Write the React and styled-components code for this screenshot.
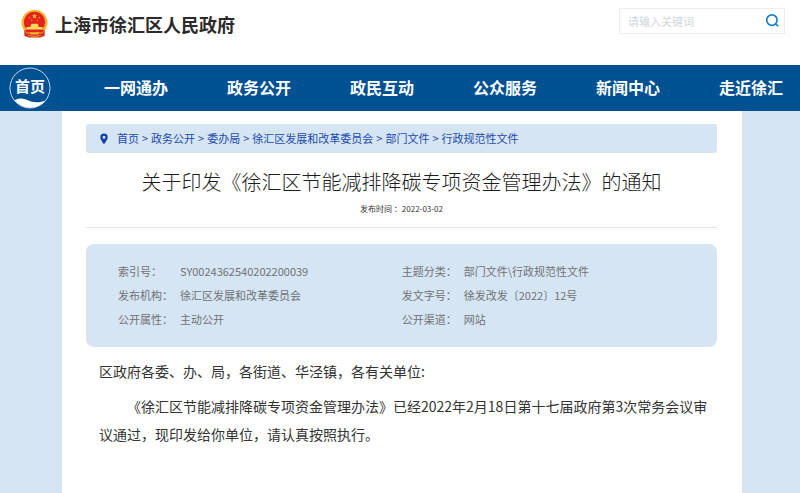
import React, { useState } from 'react';
import styled, { createGlobalStyle } from 'styled-components';

const GlobalStyle = createGlobalStyle`
  * {
    box-sizing: border-box;
  }

  body {
    margin: 0;
    background: #d5e5f3;
    color: #333333;
    font-family: 'Noto Sans CJK SC', 'Noto Sans', sans-serif;
  }
`;

// ===== Styled Components =====
const Page = styled.div`
  min-height: 100vh;
  display: flex;
  flex-direction: column;
`;

const Header = styled.header`
  display: flex;
  justify-content: space-between;
  align-items: flex-start;
  height: 65px;
  padding: 8px 15px 0 20px;
  background: #ffffff;
`;

const Brand = styled.a`
  display: flex;
  align-items: center;
  gap: 6px;
  padding-top: 1px;
  color: #2b2b2b;
  text-decoration: none;
`;

const SiteName = styled.span`
  font-size: 18px;
  line-height: 30px;
  font-weight: 700;
`;

const SearchForm = styled.form`
  display: flex;
  align-items: center;
  width: 166px;
  height: 26px;
  border: 1px solid #eeeeee;
`;

const SearchInput = styled.input`
  flex: 1;
  min-width: 0;
  padding: 0 8px;
  border: 0;
  outline: 0;
  background: transparent;
  color: #333333;
  font-family: inherit;
  font-size: 11px;

  &::placeholder {
    color: #d2d6da;
    opacity: 1;
  }
`;

const SearchButton = styled.button`
  display: grid;
  place-items: center;
  width: 24px;
  height: 24px;
  padding: 0;
  border: 0;
  background: none;
  cursor: pointer;
`;

const Nav = styled.nav`
  display: flex;
  align-items: center;
  height: 46px;
  padding: 0 17px 0 9px;
  background: #005192;
`;

const HomeLink = styled.a`
  position: relative;
  flex: none;
  width: 42px;
  height: 42px;
  color: #ffffff;
  text-align: center;
  font-size: 15px;
  line-height: 38px;
  font-weight: 700;
  text-decoration: none;
`;

const HomeRing = styled.svg`
  position: absolute;
  inset: 0;
`;

const NavList = styled.ul`
  flex: 1;
  display: flex;
  justify-content: space-between;
  margin: 0 0 0 53px;
  padding: 0 0 2px;
  list-style: none;
`;

const NavLink = styled.a`
  color: #ffffff;
  font-size: 16px;
  line-height: 24px;
  font-weight: 700;
  text-decoration: none;
  white-space: nowrap;
`;

const Main = styled.main`
  flex: 1;
  margin: 0 58px 0 62px;
  padding: 13px 25px 16px 24px;
  background: #ffffff;
`;

const Breadcrumb = styled.nav`
  display: flex;
  align-items: center;
  height: 29px;
  padding-left: 14px;
  border-radius: 3px;
  background: #d5e5f3;
  color: #2349ab;
  font-size: 11px;
`;

const Crumbs = styled.ol`
  display: flex;
  margin: 0 0 0 9px;
  padding: 0 0 2px;
  list-style: none;
`;

const Crumb = styled.li`
  white-space: nowrap;

  & + &::before {
    content: '>';
    margin: 0 3px;
  }
`;

const CrumbLink = styled.a`
  color: inherit;
  text-decoration: none;
`;

const Title = styled.h1`
  margin: 14px 0 0;
  color: #1c1c1c;
  text-align: center;
  font-size: 20px;
  line-height: 30px;
  font-weight: 300;
`;

const Published = styled.p`
  margin: 0;
  padding: 6px 0 12px;
  border-bottom: 1px solid #e6e6e6;
  text-align: center;
  font-size: 8px;
  line-height: 12px;
`;

const InfoPanel = styled.dl`
  display: grid;
  grid-template-columns: 9fr 10fr;
  margin: 16px 0 0;
  padding: 15px 0 16px 32px;
  border-radius: 8px;
  background: #d5e5f3;
  color: #707274;
  font-size: 11px;
  line-height: 24px;
`;

const InfoItem = styled.div`
  display: flex;
`;

const InfoLabel = styled.dt`
  width: 62px;
`;

const InfoValue = styled.dd`
  margin: 0;
`;

const Article = styled.article`
  padding: 10px 8px 0 13px;
  font-size: 14px;
  line-height: 28px;
`;

const Paragraph = styled.p`
  margin: 0 0 7px;
  text-indent: ${(props) => (props.$indent ? '2em' : '0')};
`;

// ===== Content =====
const navItems = ['一网通办', '政务公开', '政民互动', '公众服务', '新闻中心', '走近徐汇'];

const crumbs = ['首页', '政务公开', '委办局', '徐汇区发展和改革委员会', '部门文件', '行政规范性文件'];

const infoItems = [
  ['索引号：', 'SY0024362540202200039'],
  ['主题分类：', '部门文件\\行政规范性文件'],
  ['发布机构：', '徐汇区发展和改革委员会'],
  ['发文字号：', '徐发改发〔2022〕12号'],
  ['公开属性：', '主动公开'],
  ['公开渠道：', '网站'],
];

// ===== Drawings =====
function Emblem() {
  return (
    <svg width="29" height="30" viewBox="0 0 29 30" aria-hidden="true">
      <path d="M4 19 L4.5 27 L9 28.5 H20 L24.5 27 L25 19 Z" fill="#d9241c" />
      <path d="M14.5 .8A13 13 0 0 0 3.6 20.8L6.5 24.5H22.5L25.4 20.8A13 13 0 0 0 14.5 .8Z" fill="#f2b632" />
      <circle cx="14.5" cy="13.3" r="10.6" fill="#e3231b" />
      <path
        d="M14.5 4.4l.8 1.8 1.9.1-1.5 1.3.5 1.9-1.7-1-1.7 1 .5-1.9-1.5-1.3 1.9-.1z"
        fill="#f6b93a"
      />
      <g fill="#f29a35">
        <circle cx="9.6" cy="8.8" r="0.8" />
        <circle cx="19.4" cy="8.8" r="0.8" />
        <circle cx="11.7" cy="11.2" r="0.8" />
        <circle cx="17.3" cy="11.2" r="0.8" />
      </g>
      <path d="M10.5 16.5 L11.5 14.8 H17.5 L18.5 16.5 V18 H22.5 V20.5 H6.5 V18 H10.5 Z" fill="#fbd95c" />
      <path d="M4.5 21 H24.5 L22.5 23.5 H6.5 Z" fill="#e3231b" />
      <path d="M9.5 23.2 H19.5 L18 25.4 H11 Z" fill="#f2b632" />
      <path d="M8 26.4 Q14.5 28.4 21 26.4" fill="none" stroke="#f2a32e" strokeWidth="0.9" />
    </svg>
  );
}

function SearchIcon() {
  return (
    <svg width="14" height="14" viewBox="0 0 14 14" fill="none" stroke="#1480cc" strokeWidth="1.7" aria-hidden="true">
      <circle cx="6.9" cy="6.1" r="5.2" />
      <path d="M10 9.6 L13.2 12.2" />
    </svg>
  );
}

function PinIcon() {
  return (
    <svg width="8" height="12" viewBox="0 0 8 12" aria-hidden="true">
      <path
        fill="#153fa8"
        fillRule="evenodd"
        d="M4 .6A3.7 3.7 0 0 0 .3 4.3C.3 6.8 4 11.3 4 11.3S7.7 6.8 7.7 4.3A3.7 3.7 0 0 0 4 .6ZM4 2.8a1.5 1.5 0 1 1 0 3 1.5 1.5 0 0 1 0-3Z"
      />
    </svg>
  );
}

// ===== Component =====
export default function App() {
  const [keyword, setKeyword] = useState('');

  return (
    <Page>
      <GlobalStyle />
      <Header>
        <Brand href="#">
          <Emblem />
          <SiteName>上海市徐汇区人民政府</SiteName>
        </Brand>
        <SearchForm role="search" onSubmit={(ev) => ev.preventDefault()}>
          <SearchInput
            type="text"
            aria-label="请输入关键词"
            placeholder="请输入关键词"
            value={keyword}
            onChange={(ev) => setKeyword(ev.target.value)}
          />
          <SearchButton type="submit" aria-label="搜索">
            <SearchIcon />
          </SearchButton>
        </SearchForm>
      </Header>

      <Nav>
        <HomeLink href="#">
          <HomeRing width="42" height="42" viewBox="0 0 42 42" aria-hidden="true">
            <circle cx="21" cy="21" r="20" fill="none" stroke="#c3d8ea" strokeWidth="1" />
            <path
              d="M5.5 33.3 C9.5 31 14 30.8 18.5 33 C24 35.8 30.5 36 36.8 33.2 A20 20 0 0 1 5.5 33.3 Z"
              fill="#ffffff"
            />
          </HomeRing>
          首页
        </HomeLink>
        <NavList>
          {navItems.map((item) => (
            <li key={item}>
              <NavLink href="#">{item}</NavLink>
            </li>
          ))}
        </NavList>
      </Nav>

      <Main>
        <Breadcrumb>
          <PinIcon />
          <Crumbs>
            {crumbs.map((crumb) => (
              <Crumb key={crumb}>
                <CrumbLink href="#">{crumb}</CrumbLink>
              </Crumb>
            ))}
          </Crumbs>
        </Breadcrumb>

        <Title>关于印发《徐汇区节能减排降碳专项资金管理办法》的通知</Title>
        <Published>发布时间 ：2022-03-02</Published>

        <InfoPanel>
          {infoItems.map(([label, value]) => (
            <InfoItem key={label}>
              <InfoLabel>{label}</InfoLabel>
              <InfoValue>{value}</InfoValue>
            </InfoItem>
          ))}
        </InfoPanel>

        <Article>
          <Paragraph>区政府各委、办、局，各街道、华泾镇，各有关单位:</Paragraph>
          <Paragraph $indent>
            《徐汇区节能减排降碳专项资金管理办法》已经2022年2月18日第十七届政府第3次常务会议审议通过，现印发给你单位，请认真按照执行。
          </Paragraph>
        </Article>
      </Main>
    </Page>
  );
}
